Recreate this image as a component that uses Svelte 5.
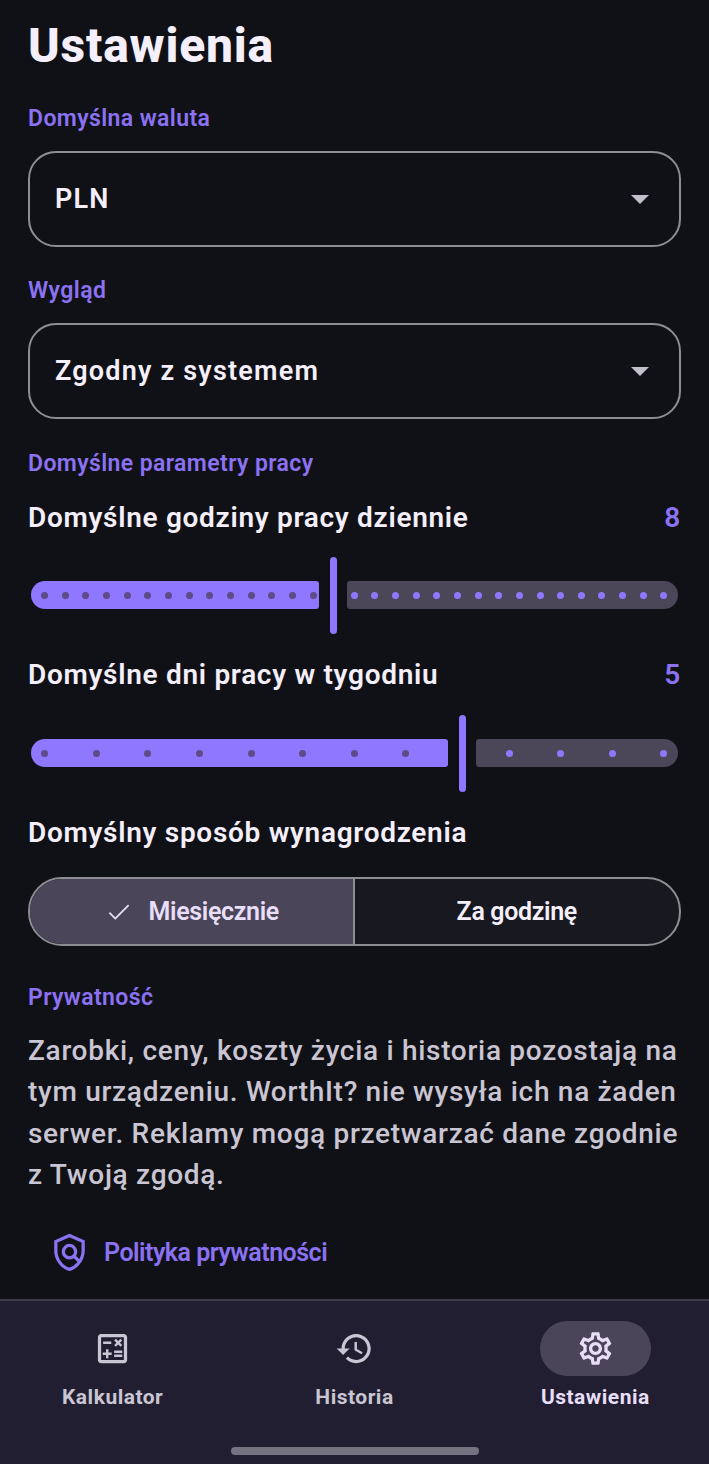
<script>
	const sliders = [
		{ label: 'Domyślne godziny pracy dziennie', value: 8, steps: 30, active: 14, thumb: 298.8 },
		{ label: 'Domyślne dni pracy w tygodniu', value: 5, steps: 12, active: 8, thumb: 427.8 }
	];

	// dots run from the first to the last inset stop of the track
	const dotStart = 16.7;
	const dotSpan = 619.2;
</script>

<div class="screen">
	<main class="content">
		<h1>Ustawienia</h1>

		<h2 class="first">Domyślna waluta</h2>
		<div class="select">
			<span>PLN</span>
			<i class="caret"></i>
		</div>

		<h2>Wygląd</h2>
		<div class="select">
			<span>Zgodny z systemem</span>
			<i class="caret"></i>
		</div>

		<h2 class="params">Domyślne parametry pracy</h2>
		{#each sliders as s}
			<div class="row">
				<span>{s.label}</span>
				<b>{s.value}</b>
			</div>
			<div class="slider">
				<div class="bar on" style:width="{s.thumb - 11}px"></div>
				<div class="thumb"></div>
				<div class="bar off"></div>
				{#each { length: s.steps + 1 } as _, i}
					{#if i !== s.active}
						<span
							class="dot"
							class:lit={i > s.active}
							style:left="{dotStart + (dotSpan * i) / s.steps}px"
						></span>
					{/if}
				{/each}
			</div>
		{/each}

		<div class="row pay">Domyślny sposób wynagrodzenia</div>
		<div class="toggle">
			<div class="opt selected">
				<svg width="30" height="30" viewBox="0 0 24 24"><path d="M9 16.2 4.8 12l-1 1L9 18.2 20.2 7l-1-1z" fill="currentColor" /></svg>
				Miesięcznie
			</div>
			<div class="opt">Za godzinę</div>
		</div>

		<h2 class="privacy">Prywatność</h2>
		<p>Zarobki, ceny, koszty życia i historia pozostają na tym urządzeniu. WorthIt? nie wysyła ich na żaden serwer. Reklamy mogą przetwarzać dane zgodnie z Twoją zgodą.</p>

		<div class="link">
			<svg width="41" height="41" viewBox="0 0 24 24" fill="none" stroke="currentColor" stroke-width="1.9">
				<path d="M12 2.1 4 5.6V11c0 4.9 3.3 9.6 8 10.9 2-.55 3.7-1.7 5-3.3 1.9-2.2 3-4.9 3-7.6V5.600z" />
				<circle cx="12" cy="11.500" r="3.600" />
				<path d="m14.600 14.100 3 3" />
			</svg>
			<span>Polityka prywatności</span>
		</div>
	</main>

	<nav>
		<div class="tab">
			<div class="pill">
				<svg width="39" height="39" viewBox="0 0 24 24" fill="currentColor"><path d="M19 3H5c-1.100 0-2 .9-2 2v14c0 1.100.9 2 2 2h14c1.100 0 2-.9 2-2V5c0-1.100-.9-2-2-2zm0 16H5V5h14v14z" /><path d="M6.250 7.720h5v1.500h-5zM13 15.750h5v1.500h-5zM13 13.250h5v1.500h-5zM8 18h1.500v-2h2v-1.500h-2v-2H8v2H6V16h2zM14.090 10.950l1.410-1.410 1.410 1.410 1.060-1.060-1.410-1.420 1.410-1.410L16.910 6 15.500 7.410 14.090 6l-1.060 1.060 1.410 1.410-1.410 1.420z" /></svg>
			</div>
			<span>Kalkulator</span>
		</div>
		<div class="tab">
			<div class="pill">
				<svg width="39" height="39" viewBox="0 0 24 24" fill="currentColor"><path d="M13 3c-4.970 0-9 4.030-9 9H1l3.890 3.890.07.14L9 12H6c0-3.870 3.130-7 7-7s7 3.130 7 7-3.130 7-7 7c-1.930 0-3.680-.79-4.940-2.060l-1.420 1.420C8.270 19.990 10.510 21 13 21c4.970 0 9-4.030 9-9s-4.030-9-9-9zm-1 5v5l4.280 2.540.72-1.210-3.500-2.080V8H12z" /></svg>
			</div>
			<span>Historia</span>
		</div>
		<div class="tab active">
			<div class="pill">
				<svg width="39" height="39" viewBox="0 0 24 24" fill="currentColor"><path d="M19.430 12.980c.04-.32.07-.64.07-.98 0-.34-.03-.66-.07-.98l2.110-1.650c.19-.15.24-.42.12-.64l-2-3.460c-.09-.16-.26-.25-.44-.25-.06 0-.12.01-.17.03l-2.490 1c-.52-.4-1.080-.73-1.690-.98l-.38-2.650C14.460 2.180 14.250 2 14 2h-4c-.25 0-.46.18-.49.42l-.38 2.650c-.61.25-1.170.59-1.690.98l-2.490-1c-.06-.02-.12-.03-.18-.03-.17 0-.34.09-.43.25l-2 3.460c-.13.22-.07.49.12.64l2.110 1.650c-.04.32-.07.65-.07.98 0 .33.03.66.07.98l-2.110 1.650c-.19.15-.24.42-.12.64l2 3.460c.09.16.26.25.44.25.06 0 .12-.01.17-.03l2.490-1c.52.4 1.080.73 1.690.98l.38 2.650c.03.24.24.42.49.42h4c.25 0 .46-.18.49-.42l.38-2.650c.61-.25 1.170-.59 1.690-.98l2.490 1c.06.02.12.03.18.03.17 0 .34-.09.43-.25l2-3.460c.12-.22.07-.49-.12-.64l-2.110-1.650zm-1.980-1.710c.04.31.05.52.05.73 0 .21-.02.43-.05.73l-.14 1.130.89.7 1.080.84-.7 1.210-1.270-.51-1.040-.42-.9.68c-.43.32-.84.56-1.250.73l-1.060.43-.16 1.130-.2 1.350h-1.400l-.19-1.350-.16-1.130-1.060-.43c-.43-.18-.83-.41-1.230-.71l-.91-.7-1.060.43-1.270.51-.7-1.210 1.080-.84.89-.7-.14-1.130c-.03-.31-.05-.54-.05-.74s.02-.43.05-.73l.14-1.130-.89-.7-1.080-.84.7-1.210 1.270.51 1.040.42.9-.68c.43-.32.84-.56 1.250-.73l1.060-.43.16-1.130.2-1.350h1.390l.19 1.350.16 1.130 1.060.43c.43.18.83.41 1.230.71l.91.7 1.060-.43 1.270-.51.7 1.210-1.070.85-.89.7.14 1.130zM12 8c-2.210 0-4 1.790-4 4s1.790 4 4 4 4-1.790 4-4-1.790-4-4-4zm0 6c-1.100 0-2-.9-2-2s.9-2 2-2 2 .9 2 2-.9 2-2 2z" /></svg>
			</div>
			<span>Ustawienia</span>
		</div>
		<div class="home"></div>
	</nav>
</div>

<style>
	:global(body) {
		background: #101116;
	}
	.screen {
		height: 1464px;
		display: flex;
		flex-direction: column;
		font-family: Roboto, 'Noto Sans', sans-serif;
		color: #f4effa;
		overflow: hidden;
	}
	.content {
		flex: 1;
		padding: 0 28px;
	}
	h1 {
		margin: 0;
		padding-top: 18px;
		font-size: 48px;
		line-height: 56px;
		font-weight: 800;
		letter-spacing: 0.8px;
	}
	h2 {
		margin: 30px 0 18px;
		font-size: 23px;
		line-height: 28px;
		font-weight: 600;
		color: #8b72f3;
		letter-spacing: 0.4px;
	}
	h2.first {
		margin-top: 31px;
	}
	h2.params {
		margin: 31px 0 20px;
	}
	h2.privacy {
		margin: 38px 0 18px;
	}
	.select {
		height: 96px;
		box-sizing: border-box;
		border: 2px solid #8e8d92;
		border-radius: 28px;
		padding: 0 25px;
		display: flex;
		align-items: center;
		justify-content: space-between;
		font-size: 27px;
		font-weight: 600;
		letter-spacing: 1.2px;
	}
	.caret {
		width: 0;
		height: 0;
		margin-right: 5px;
		border-left: 9px solid transparent;
		border-right: 9px solid transparent;
		border-top: 9px solid #c4c0cb;
	}
	.row {
		display: flex;
		justify-content: space-between;
		align-items: center;
		height: 38px;
		font-size: 28px;
		font-weight: 600;
		letter-spacing: 0.7px;
	}
	.row b {
		font-weight: 600;
		color: #8b72f3;
	}
	.row.pay {
		margin-bottom: 26px;
	}
	.slider {
		position: relative;
		height: 78px;
		margin: 20px 0 21px;
		padding: 0 3px;
		display: flex;
		align-items: center;
		gap: 10px;
	}
	.slider + .row + .slider {
		margin-top: 21px;
	}
	.bar {
		height: 28px;
		box-sizing: border-box;
	}
	.bar.on {
		margin-right: 1px;
		background: #9077ff;
		border-radius: 14px 3px 3px 14px;
	}
	.bar.off {
		flex: 1;
		background: #4c4659;
		border-radius: 3px 14px 14px 3px;
	}
	.thumb {
		width: 7px;
		height: 77px;
		border-radius: 4px;
		background: #9077ff;
	}
	.dot {
		position: absolute;
		top: 50%;
		width: 7px;
		height: 7px;
		margin: -3.5px 0 0 -3.5px;
		border-radius: 50%;
		background: #5e4b87;
	}
	.dot.lit {
		background: #9077ff;
	}
	.toggle {
		height: 69px;
		box-sizing: border-box;
		display: grid;
		grid-template-columns: 1fr 1fr;
		border: 2px solid #8e8d92;
		border-radius: 34px;
		overflow: hidden;
		background: #181820;
	}
	.opt {
		display: flex;
		align-items: center;
		justify-content: center;
		gap: 15px;
		font-size: 25px;
		font-weight: 600;
		letter-spacing: -0.35px;
	}
	.opt.selected {
		background: #4a4558;
		border-right: 2px solid #8e8d92;
		color: #e8def8;
	}
	p {
		margin: 0;
		font-size: 28px;
		line-height: 41.3px;
		font-weight: 500;
		letter-spacing: 0.7px;
		color: #cac5d2;
	}
	.link {
		display: flex;
		align-items: center;
		gap: 14px;
		margin: 37px 0 0 21px;
		color: #8b72f3;
		font-size: 25px;
		font-weight: 600;
		letter-spacing: -0.5px;
	}
	nav {
		position: relative;
		height: 165px;
		box-sizing: border-box;
		border-top: 2px solid #3d3b48;
		background: #201e30;
		display: grid;
		grid-template-columns: repeat(3, 1fr);
		padding: 20px 0 0 0;
	}
	.tab {
		display: flex;
		flex-direction: column;
		align-items: center;
		color: #cac5d2;
		font-size: 21px;
		font-weight: 700;
		letter-spacing: 0.5px;
	}
	.tab:first-child {
		margin-left: -11px;
	}
	.tab:nth-child(3) {
		margin-left: 9px;
	}
	.pill {
		width: 111px;
		height: 55px;
		border-radius: 28px;
		display: flex;
		align-items: center;
		justify-content: center;
		margin-bottom: 9px;
	}
	.tab.active {
		color: #e8def8;
	}
	.tab.active .pill {
		background: #4a4558;
	}
	.home {
		position: absolute;
		left: 231px;
		bottom: 9px;
		width: 248px;
		height: 8px;
		border-radius: 4px;
		background: #75737f;
	}
</style>
